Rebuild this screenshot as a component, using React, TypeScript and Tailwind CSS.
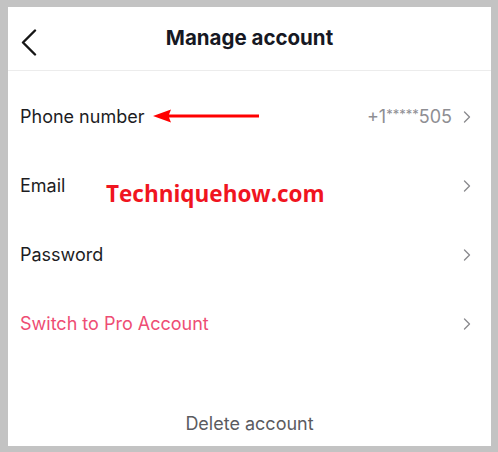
import { ChevronRight } from "lucide-react";

type RowProps = {
  label: string;
  value?: React.ReactNode;
  pink?: boolean;
  children?: React.ReactNode;
};

function Row({ label, value, pink, children }: RowProps) {
  return (
    <div className="relative flex h-[69px] items-center justify-between pl-[12px] pr-[14px]">
      <span
        className={`text-[18px] ${pink ? "text-[#ee4d74]" : "text-[#1d1d1f]"}`}
      >
        {label}
      </span>
      <div className="flex items-center gap-[5px]">
        {value && <span className="text-[18px] text-[#8e8e93]">{value}</span>}
        <ChevronRight className="size-[20px] text-[#8a8a8e]" strokeWidth={1.6} />
      </div>
      {children}
    </div>
  );
}

export default function App() {
  return (
    <div
      className="h-[452px] w-[498px] bg-[#c3c3c3] pt-[7px] pb-[6px] pl-[8px] pr-[7px]"
      style={{ fontFamily: "Inter, 'Noto Sans', sans-serif" }}
    >
      <div className="flex h-full flex-col bg-white">
        {/* Header */}
        <div className="relative flex h-[64px] shrink-0 items-center justify-center border-b border-[#ececec]">
          <svg
            className="absolute left-[13px] top-[22px]"
            width="16"
            height="27"
            viewBox="0 0 16 27"
            fill="none"
          >
            <path
              d="M14 1.5 L2 13.5 L14 25.5"
              stroke="#161616"
              strokeWidth="2.4"
              strokeLinecap="round"
              strokeLinejoin="round"
            />
          </svg>
          <h1 className="text-[20.5px] font-bold text-[#161823]">
            Manage account
          </h1>
        </div>

        <div className="mt-[11px] flex flex-col">
          <Row
            label="Phone number"
            value={
              <>
                +1
                <span className="relative -top-[4px] text-[13px]">*****</span>
                505
              </>
            }
          >
            {/* red pointer arrow */}
            <svg
              className="absolute left-[144px] top-[26px]"
              width="110"
              height="16"
              viewBox="0 0 110 16"
            >
              <path d="M1 8 L19 1.5 L17 6.5 L107 6.5 L107 9.5 L17 9.5 L19 14.5 Z" fill="#f00" />
            </svg>
          </Row>
          <Row label="Email">
            <span
              className="absolute left-[98px] top-[26px] text-[22.5px] font-bold text-[#f0151f]"
              style={{ fontFamily: "'Open Sans', sans-serif" }}
            >
              Techniquehow.com
            </span>
          </Row>
          <Row label="Password" />
          <Row label="Switch to Pro Account" pink />
        </div>

        <div className="mt-auto flex h-[36px] items-start justify-center">
          <span className="text-[18px] text-[#5b5b5f]">Delete account</span>
        </div>
      </div>
    </div>
  );
}
